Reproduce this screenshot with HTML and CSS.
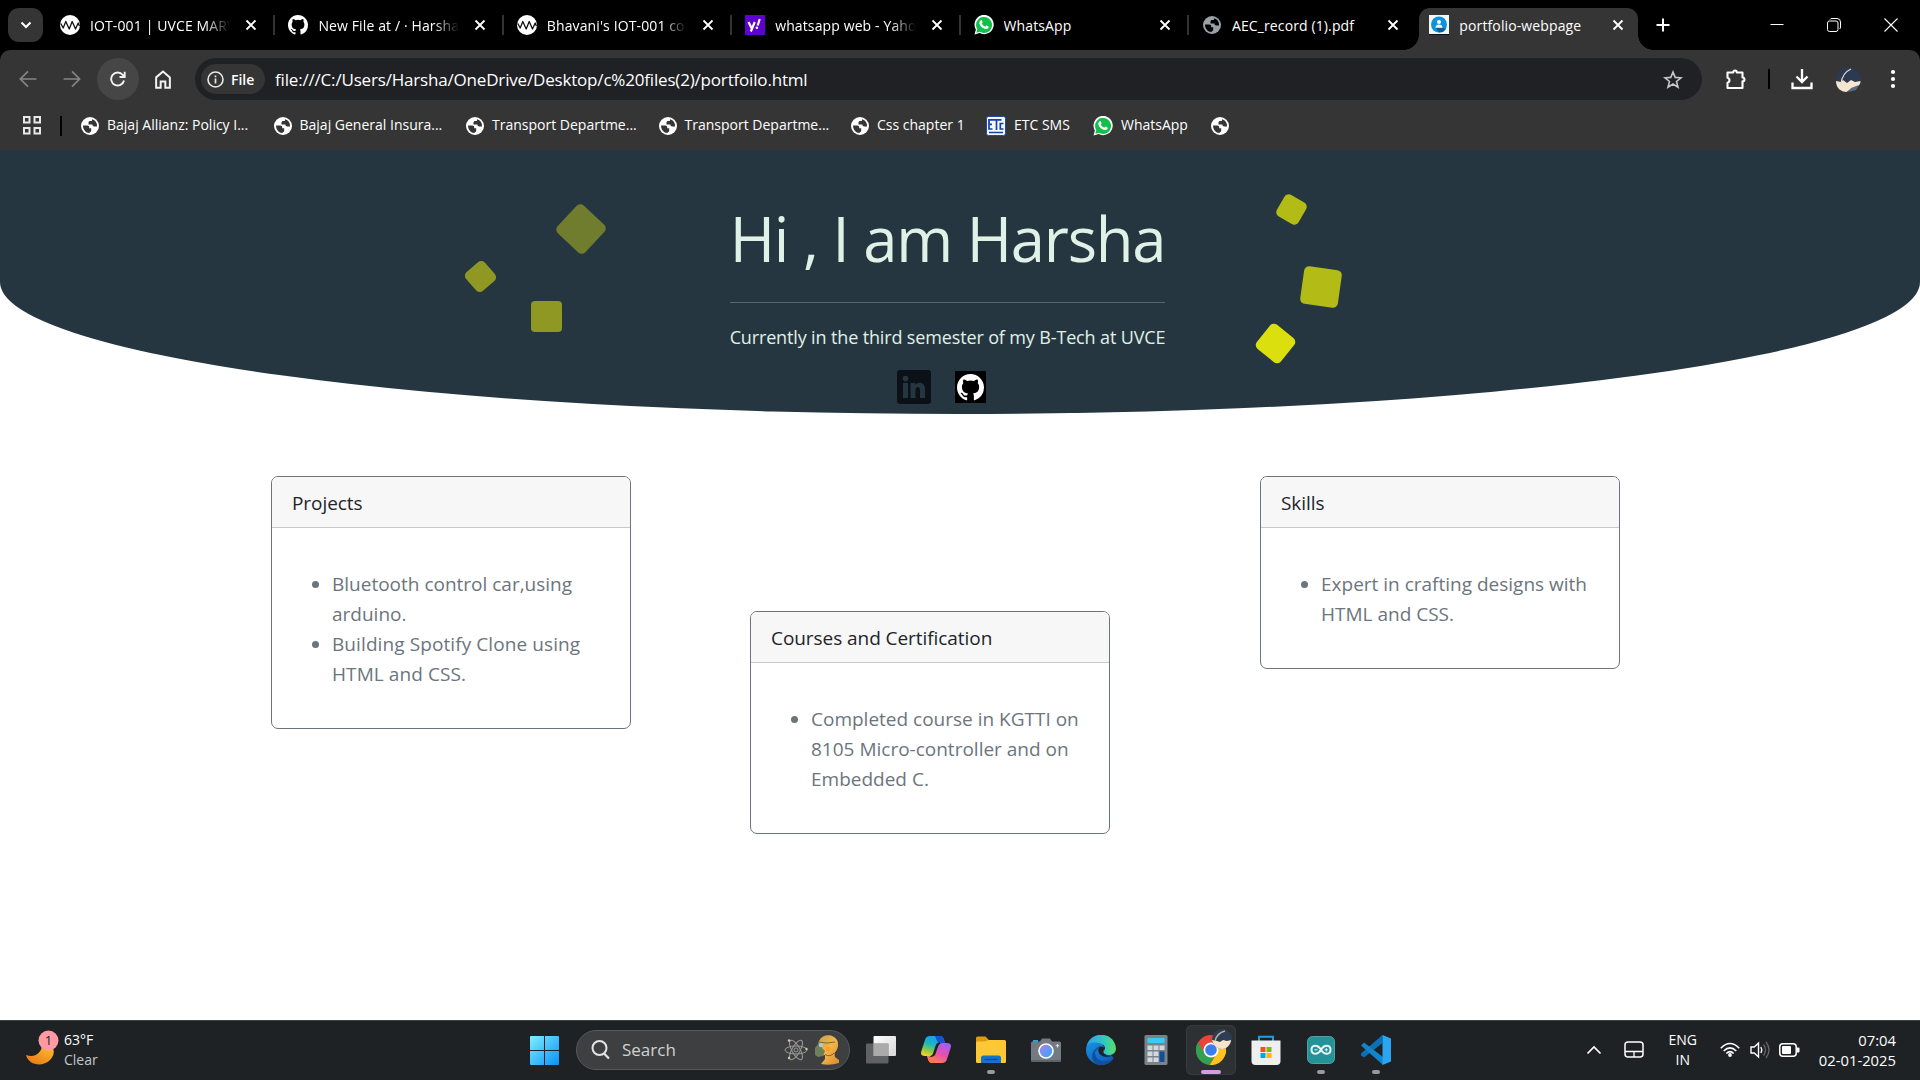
FILE: index.html
```html
<!DOCTYPE html>
<html lang="en">
<head>
<meta charset="utf-8">
<title>portfolio-webpage</title>
<link rel="stylesheet" href="styles.css">
</head>
<body>
<svg class="defs" aria-hidden="true">
  <symbol id="x" viewBox="0 0 12 12"><path d="M1.500 1.500l9 9M10.500 1.500l-9 9" stroke="currentColor" stroke-width="1.800" fill="none"/></symbol>
  <symbol id="wave" viewBox="0 0 20 20"><circle cx="10" cy="10" r="10" fill="#fff"/><path d="M.8 8.500l2.400 4.500 2.600-6.500 3.400 7.500 3-7.500 3.300 7.500 2.700-6 1.200 3" fill="none" stroke="#111" stroke-width="1.300" stroke-linejoin="round"/></symbol>
  <symbol id="github" viewBox="0 0 16 16"><path fill="currentColor" d="M8 0C3.580 0 0 3.580 0 8c0 3.540 2.290 6.530 5.470 7.590.4.070.55-.17.55-.38 0-.19-.01-.82-.01-1.490-2.010.37-2.530-.49-2.690-.94-.09-.23-.48-.94-.82-1.130-.28-.15-.68-.52-.01-.53.63-.01 1.080.58 1.230.82.72 1.210 1.870.87 2.330.66.07-.52.28-.87.51-1.070-1.780-.2-3.640-.89-3.640-3.950 0-.87.31-1.590.82-2.150-.08-.2-.36-1.020.08-2.120 0 0 .67-.21 2.200.82a7.600 7.600 0 0 1 4 0c1.530-1.040 2.200-.82 2.200-.82.44 1.100.16 1.920.08 2.120.51.56.82 1.270.82 2.150 0 3.070-1.870 3.750-3.650 3.950.29.25.54.73.54 1.480 0 1.070-.01 1.930-.01 2.200 0 .21.15.46.55.38A8 8 0 0 0 16 8c0-4.420-3.580-8-8-8z"/></symbol>
  <symbol id="globe" viewBox="0 0 18 18"><circle cx="9" cy="9" r="9" fill="currentColor"/><path d="M2 8.500h4.200c1.300 0 2 .7 2 1.800v.9h2v2.300c0 1-.8 1.600-1.900 2.500C5 15.800 2 13 2 8.500zM11 2.300C14.500 3.200 16.300 6 16 9.600h-2.700c-1.200 0-1.900-.8-1.900-2H7.500V5.800c0-1.200.7-1.800 1.900-1.800h1.100c.6 0 .6-.9.500-1.700z" fill="var(--hole)"/></symbol>
  <symbol id="whatsapp" viewBox="0 0 20 20"><path d="M.5 19.500l1.400-5A9.600 9.600 0 1 1 5.600 18z" fill="#fff"/><path d="M2.300 17.700l1-3.500a8 8 0 1 1 2.700 2.600z" fill="#10c04a"/><path d="M6.700 5.300c.5-.4 1-.3 1.200.2l.7 1.600c.1.400-.5 1-.8 1.400.8 1.500 1.900 2.500 3.500 3.200.5-.5.900-1.200 1.300-1.100l1.900.9c.4.3.1 1.300-.3 1.800-.7.800-1.900 1-3.200.6-2.700-.9-4.800-2.900-5.600-5.200-.4-1.400.3-2.700 1.300-3.400z" fill="#fff"/></symbol>
</svg>

<div class="tabstrip">
  <button class="tabsearch"><svg width="12" height="8" viewBox="0 0 12 8"><path d="M1.500 1.500L6 6l4.500-4.500" fill="none" stroke="#fff" stroke-width="2"/></svg></button>
  <div class="tab"><svg class="fav"><use href="#wave"/></svg><span class="name fade"><b class="t">IOT-001 | UVCE MARV</b></span><svg class="close"><use href="#x"/></svg></div>
  <div class="tab"><svg class="fav"><use href="#github"/></svg><span class="name fade"><b class="t">New File at / · Harsha</b></span><svg class="close"><use href="#x"/></svg></div>
  <div class="tab"><svg class="fav"><use href="#wave"/></svg><span class="name fade"><b class="t">Bhavani's IOT-001 cou</b></span><svg class="close"><use href="#x"/></svg></div>
  <div class="tab"><svg class="fav" viewBox="0 0 20 20"><rect width="20" height="20" fill="#5f01d1"/><path d="M3.500 7l3 6M9.800 7l-4 9.500M14.700 4l-2 6.500" stroke="#fff" stroke-width="2.200" fill="none"/><circle cx="11.900" cy="12.800" r="1.300" fill="#fff"/></svg><span class="name fade"><b class="t">whatsapp web - Yaho</b></span><svg class="close"><use href="#x"/></svg></div>
  <div class="tab"><svg class="fav"><use href="#whatsapp"/></svg><span class="name"><b class="t">WhatsApp</b></span><svg class="close"><use href="#x"/></svg></div>
  <div class="tab last"><svg class="fav dim"><use href="#globe" x="1" y="1" width="18" height="18"/></svg><span class="name"><b class="t">AEC_record (1).pdf</b></span><svg class="close"><use href="#x"/></svg></div>
  <div class="tab active"><svg class="fav" viewBox="0 0 20 20"><rect width="20" height="19" fill="#f4f6f8"/><rect y="19" width="20" height="1" fill="#111"/><circle cx="10" cy="9.500" r="8" fill="#0c93dc"/><path d="M6.500 12.500h7l3.500 1.500-3 3-4 .500z" fill="#0b5e96"/><circle cx="10" cy="7" r="2" fill="#fff"/><path d="M6.500 12.700c0-4.200 7-4.200 7 0z" fill="#fff"/></svg><span class="name"><b class="t">portfolio-webpage</b></span><svg class="close"><use href="#x"/></svg></div>
  <svg class="plus" width="14" height="14" viewBox="0 0 14 14"><path d="M7 .5v13M.5 7h13" stroke="#fff" stroke-width="2"/></svg>
  <div class="winctl">
    <svg width="14" height="14" viewBox="0 0 14 14"><path d="M.5 6.500h13" stroke="#fff"/></svg>
    <svg width="14" height="14" viewBox="0 0 14 14"><rect x=".5" y="3" width="10.500" height="10.500" rx="2" fill="none" stroke="#fff"/><path d="M3 1.500q.5-1 2-1h5q3.500 0 3.500 3.500v5q0 1.500-1 2" fill="none" stroke="#fff"/></svg>
    <svg width="14" height="14" viewBox="0 0 14 14"><path d="M.5.5l13 13M13.500.5l-13 13" stroke="#fff" stroke-width="1.100"/></svg>
  </div>
</div>

<div class="chrome">
  <div class="toolbar">
    <svg class="nav off" viewBox="0 0 16 16"><path d="M15.500 8H1.500M8 1.200L1.200 8 8 14.800" /></svg>
    <svg class="nav off" viewBox="0 0 16 16"><path d="M.5 8h14M8 1.200L14.800 8 8 14.800" /></svg>
    <span class="reload"><svg class="nav" viewBox="0 0 16 16"><path d="M14 9.500A6.500 6.500 0 1 1 12.800 4L14.500 5.800M14.700.8v5.200H9.500"/></svg></span>
    <svg class="nav home" viewBox="0 0 16 18"><path d="M1.500 7L8 1.500 14.500 7v9.800h-4.300V11H5.800v5.800H1.500z"/></svg>
    <div class="omnibox">
      <span class="chip"><svg width="17" height="17" viewBox="0 0 17 17"><circle cx="8.500" cy="8.500" r="7.500" fill="none" stroke="#e8e8e8" stroke-width="1.600"/><path d="M8.500 7.500v5M8.500 4.500v1.800" stroke="#e8e8e8" stroke-width="1.700"/></svg><b class="t">File</b></span>
      <span class="url"><b class="t">file:///C:/Users/Harsha/OneDrive/Desktop/c%20files(2)/portfoilo.html</b></span>
      <svg width="20" height="19" viewBox="0 0 20 19"><path d="M10 2l2.200 5.400 5.800.4-4.500 3.700 1.500 5.700-5-3.200-5 3.200 1.500-5.700L2 7.800l5.800-.4z" fill="none" stroke="#c7c7c7" stroke-width="1.600"/></svg>
    </div>
    <div class="tools">
      <svg width="22" height="22" viewBox="0 0 22 22"><path d="M2.500 4.500h5.700c0-2.600 3.600-2.600 3.600 0h5.700v5c2.600 0 2.600 3.800 0 3.800v6.700H2.500v-5.300c2.600-.6 2.600-4.400 0-5z" fill="none" stroke="#fff" stroke-width="2.100" stroke-linejoin="round"/></svg>
      <i class="bar"></i>
      <svg width="22" height="22" viewBox="0 0 22 22"><path d="M11 1v13M5.500 8.500L11 14l5.500-5.500M1.500 14.500v5.500h19v-5.500" fill="none" stroke="#fff" stroke-width="2.300"/></svg>
      <svg width="25" height="25" viewBox="0 0 25 25"><circle cx="12.500" cy="12.500" r="12.500" fill="#2b3a50"/><path d="M0 14l5 1 2-2 4 3 4-3 4 2 5.500-1c0 4-3 6-6 7l-4 1-4 3C5 25 0 21 0 14z" fill="#f6e6cf"/><path d="M5 17Q6 6 15 2" stroke="#e8dcc8" stroke-width="1.200" fill="none"/><path d="M15 21l8-3-3 5-8 2z" fill="#5b6b80"/></svg>
      <svg width="6" height="20" viewBox="0 0 6 20"><circle cx="3" cy="3" r="2.100" fill="#fff"/><circle cx="3" cy="10" r="2.100" fill="#fff"/><circle cx="3" cy="17" r="2.100" fill="#fff"/></svg>
    </div>
  </div>
  <div class="bookmarks">
    <svg class="apps" width="18" height="19" viewBox="0 0 18 19"><path d="M1 1h5.500v5.500H1zM11.500 1H17v5.500h-5.500zM1 12h5.500v5.500H1zM11.500 12H17v5.500h-5.500z" fill="none" stroke="#e8e8e8" stroke-width="2"/></svg>
    <i class="bar"></i>
    <span class="bm wide"><svg class="gl"><use href="#globe"/></svg><b class="t">Bajaj Allianz: Policy I...</b></span>
    <span class="bm wide"><svg class="gl"><use href="#globe"/></svg><b class="t">Bajaj General Insura...</b></span>
    <span class="bm wide"><svg class="gl"><use href="#globe"/></svg><b class="t">Transport Departme...</b></span>
    <span class="bm wide"><svg class="gl"><use href="#globe"/></svg><b class="t">Transport Departme...</b></span>
    <span class="bm w135"><svg class="gl"><use href="#globe"/></svg><b class="t">Css chapter 1</b></span>
    <span class="bm w107"><svg class="i20" viewBox="0 0 20 20"><rect x=".5" y=".5" width="19" height="19" rx="2" fill="#f5f8ff" stroke="#1c48b0"/><path d="M7 3.800H3V13h3.500M3 8.300h3M6.500 3.800h9M10.500 4v10M17.500 7.500h-3.200V13h3.200M3 16.500h14" fill="none" stroke="#1440a8" stroke-width="1.700"/></svg><b class="t">ETC SMS</b></span>
    <span class="bm w118"><svg class="i20"><use href="#whatsapp"/></svg><b class="t">WhatsApp</b></span>
    <span class="bm"><svg class="gl"><use href="#globe"/></svg></span>
  </div>
</div>

<main class="page">
  <header class="hero">
    <i class="sq s1"></i><i class="sq s2"></i><i class="sq s3"></i><i class="sq s4"></i><i class="sq s5"></i><i class="sq s6"></i>
    <h1>Hi , I am Harsha</h1>
    <hr>
    <p>Currently in the third semester of my B-Tech at UVCE</p>
    <div class="social">
      <svg width="34" height="34" viewBox="0 0 34 34"><path fill-rule="evenodd" d="M3 0h28a3 3 0 0 1 3 3v28a3 3 0 0 1-3 3H3a3 3 0 0 1-3-3V3a3 3 0 0 1 3-3zM6 13v15h5V13zM8.500 5.800a2.800 2.800 0 1 0 0 5.600 2.800 2.800 0 0 0 0-5.600zM13.500 13v15h5v-8c0-4 4.500-4 4.500 0v8h5v-9c0-7-7-8-9.700-4v-2z" fill="#0b1116"/></svg>
      <span class="gh"><svg width="27" height="27"><use href="#github"/></svg></span>
    </div>
  </header>
  <section class="cards">
    <article class="card c1"><h2>Projects</h2><ul><li>Bluetooth control car,using<br>arduino.</li><li class="loose">Building Spotify Clone using<br>HTML and CSS.</li></ul></article>
    <article class="card c2"><h2>Courses and Certification</h2><ul><li>Completed course in KGTTI on<br>8105 Micro-controller and on<br>Embedded C.</li></ul></article>
    <article class="card c3"><h2>Skills</h2><ul><li>Expert in crafting designs with<br>HTML and CSS.</li></ul></article>
  </section>
</main>

<footer class="taskbar">
  <div class="weather">
    <svg width="40" height="40" viewBox="0 0 40 40"><defs><linearGradient id="mo" x1="1" y1="0" x2=".3" y2="1"><stop offset="0" stop-color="#f9c22b"/><stop offset="1" stop-color="#ef7a1a"/></linearGradient></defs><path d="M6 25c9 3 15-2 16-9h10c3 5 2 10-2 14-7 7-21 6-24-5z" fill="url(#mo)"/><circle cx="28.500" cy="10.500" r="10" fill="#ff99a4"/><text x="28.500" y="15" text-anchor="middle" class="badge">1</text></svg>
    <div><b class="t">63°F</b><br><b class="t clear">Clear</b></div>
  </div>
  <svg class="start" width="29" height="29" viewBox="0 0 29 29"><defs><linearGradient id="wn" x2="1" y2="1"><stop offset="0" stop-color="#7df0ff"/><stop offset="1" stop-color="#0a90f8"/></linearGradient></defs><path d="M1 0h13v14H0V1a1 1 0 0 1 1-1zM15 0h13a1 1 0 0 1 1 1v13H15zM0 15h14v14H1a1 1 0 0 1-1-1zM15 15h14v13a1 1 0 0 1-1 1H15z" fill="url(#wn)"/></svg>
  <div class="search">
    <svg width="20" height="20" viewBox="0 0 20 20"><circle cx="8.500" cy="8" r="7" fill="none" stroke="#e4e4e4" stroke-width="2"/><path d="M13 13.500l5 5" stroke="#e4e4e4" stroke-width="2.200"/></svg>
    <b class="t">Search</b>
    <svg class="atom" width="24" height="24" viewBox="0 0 24 24"><g fill="none" stroke="#9b9b98" stroke-width="1"><ellipse cx="12" cy="12" rx="11" ry="4"/><ellipse cx="12" cy="12" rx="11" ry="4" transform="rotate(60 12 12)"/><ellipse cx="12" cy="12" rx="11" ry="4" transform="rotate(120 12 12)"/><circle cx="12" cy="12" r="2"/></g><circle cx="5" cy="2.500" r="1.200" fill="#d8c8a0"/><circle cx="22.500" cy="11" r="1.200" fill="#d8c8a0"/><circle cx="5" cy="20" r="1.200" fill="#b8d8a0"/></svg>
    <svg width="26" height="30" viewBox="0 0 26 30"><defs><linearGradient id="hd" x2="1" y2="1"><stop offset="0" stop-color="#b89a50"/><stop offset=".5" stop-color="#f2b84b"/><stop offset="1" stop-color="#d98a2c"/></linearGradient></defs><path d="M5 6C9-2 20-1 23.500 6c1.500 5 0 9-3 12l.5 4 4 3v3q-9 3-18 1l4-5v-4l-6 1-3-3-1-4 3-4z" fill="url(#hd)"/><path d="M1 13l4-5 4 1-1 4 3 3-2 5-5 1-3-2z" fill="#6e7f5a"/><circle cx="7" cy="10" r="2.200" fill="#a8cbd6"/><path d="M4 7l9 1 8-1" stroke="#7c6a3c" stroke-width="1.200" fill="none"/><circle cx="14" cy="14" r="2.600" fill="#ff9c2b"/><path d="M11 19.500q5 3 9-1.500" stroke="#8a5a20" fill="none"/></svg>
  </div>
  <div class="apps-row">
    <span class="app"><svg viewBox="0 0 30 30"><defs><linearGradient id="tv" x2="1" y2="1"><stop offset="0" stop-color="#fff"/><stop offset="1" stop-color="#d6d6d6"/></linearGradient></defs><rect x="7.500" y="1" width="22.500" height="20" rx="1" fill="url(#tv)"/><rect y="8.500" width="22.500" height="20" rx="1" fill="#777" fill-opacity=".75"/><rect x="7.500" y="8.500" width="15" height="12.500" fill="#aaa"/></svg></span>
    <span class="app"><svg viewBox="0 0 30 30"><defs><linearGradient id="ca" x1=".6" x2=".2" y2="1"><stop offset="0" stop-color="#1aa0f0"/><stop offset=".4" stop-color="#18b5c4"/><stop offset=".7" stop-color="#7cc850"/><stop offset="1" stop-color="#ffd21c"/></linearGradient><linearGradient id="cb" x1=".7" x2=".2" y2="1"><stop offset="0" stop-color="#a060f0"/><stop offset=".5" stop-color="#ea4fae"/><stop offset="1" stop-color="#ff8a40"/></linearGradient></defs><path d="M9 1h10q3 0 4 4l1 3h-5q-3 0-4 3l-2 7q-1 3-4 3H4q-4 0-4-3 0-1 1-4L4 5q1-4 5-4z" fill="url(#ca)"/><path d="M14 1h5q3 0 4 4l1 3h-5q-2 0-3-2z" fill="#1b50d4"/><path d="M21 28H11q-3 0-4-4l-1-3h4q3 0 4-3l3-7q1-3 4-3h5q4 0 4 3 0 1-1 4l-3 9q-1 4-5 4z" fill="url(#cb)"/><path d="M6 21h4q2 0 3-2l2 9h-4q-3 0-4-4z" fill="#ff7654"/><path d="M15.500 10.500q1-2.500 3.500-2.500-2 1-2.700 3.200l-2.500 7.500q-.8 2-2.800 2.300 1.300-1 1.800-2.500z" fill="#1e2225" stroke="#1e2225" stroke-width="1.500"/></svg></span>
    <span class="app run"><svg viewBox="0 0 30 30"><path d="M0 3q0-1.500 1.500-1.500h8L13 5h12v6H0z" fill="#e09a10"/><path d="M1.500 6.500H9L13 5h15.500Q30 5 30 6.500V27q0 1-1.500 1h-27Q0 28 0 27V8q0-1.500 1.500-1.500z" fill="#fcc934"/><path d="M5 28v-5q0-2.500 2.500-2.500h15Q25 20.500 25 23v5z" fill="#1173cc"/><path d="M8.500 24.500h13" stroke="#0a4f96" stroke-width="1.300"/></svg></span>
    <span class="app"><svg viewBox="0 0 30 30"><path d="M2 5h5v3H2z" fill="#20a8e8"/><path d="M0 8q0-1.500 1.500-1.500H9l2-3h8l2 3h7.500Q30 6.500 30 8v18H0z" fill="#747a82"/><path d="M0 25h30v2H1q-1 0-1-1z" fill="#5d636b"/><defs><linearGradient id="cm" x2="1" y2="1"><stop offset="0" stop-color="#b87af0"/><stop offset="1" stop-color="#20b0f0"/></linearGradient></defs><circle cx="15" cy="16" r="7" fill="url(#cm)" stroke="#fff" stroke-width="1.600"/><path d="M26.500 9v3.500M24.700 10.700h3.600" stroke="#dde" stroke-width="1"/></svg></span>
    <span class="app"><svg viewBox="0 0 30 30"><defs><linearGradient id="ea" x2="1"><stop offset="0" stop-color="#2aa4ea"/><stop offset=".6" stop-color="#30c8c0"/><stop offset="1" stop-color="#5be064"/></linearGradient><linearGradient id="eb" x2=".6" y2="1"><stop offset="0" stop-color="#1a9de8"/><stop offset="1" stop-color="#0d60c0"/></linearGradient></defs><path d="M15 0C7 0 0 7 0 15s7 15 15 15c5 0 10-3 12.500-7.500L18 14z" fill="url(#eb)"/><path d="M9 17c0 8 8 13 19 6-4 7-13 9-19 5-4-4-5-12 5-17-3 4-4 5-5 6z" fill="#124f9c"/><path d="M1 10C5-3 24-4 29 9c3 8-2 11-6 11-4 0-6-2-5-4 3-4-1-8-6-8-5-1-9 0-11 2z" fill="url(#ea)"/><path d="M17.500 12.500c-3-2.500-6 .5-5 4 1 4.500 7 7 15 4-3 .5-6 .5-9-1.500-1.800-1.500-1.600-2.700-.7-4 .4-1 .3-1.700-.3-2.500z" fill="#1f2326"/></svg></span>
    <span class="app"><svg viewBox="0 0 30 30"><rect x="3.500" width="23" height="30" rx="1.500" fill="#7c8388"/><rect x="6.500" y="3" width="17" height="5" fill="#35cdf2"/><path d="M6.500 10.500h5v4.500h-5zM12.500 10.500h5v4.500h-5zM18.500 10.500h5v4.500h-5zM6.500 16.500h5v4.500h-5zM12.500 16.500h5v4.500h-5zM6.500 22.500h5V27h-5zM12.500 22.500h5V27h-5z" fill="#d2d8dc"/><path d="M18.500 16.500h5V27h-5z" fill="#124f96"/></svg></span>
    <span class="app on"><svg viewBox="0 0 30 30"><circle cx="15" cy="15" r="15" fill="#e8453a"/><path d="M2 7.500A15 15 0 0 0 13.500 30l7-12L8.500 18z" fill="#30a14e"/><path d="M15 8h13.300A15 15 0 0 1 13.800 30L21 18z" fill="#fdc420"/><circle cx="15" cy="15" r="7.500" fill="#fff"/><circle cx="15" cy="15" r="5.800" fill="#3b7df0"/></svg><svg class="face" viewBox="0 0 20 20"><circle cx="10" cy="10" r="10" fill="#2f3d54"/><path d="M0 11l5 1 3 1 3-2 4 1 4-1c0 4-4 9-9 9S1 16 0 11z" fill="#f4e4cc"/><path d="M3 12Q5 4 13 2" stroke="#b9b4aa" stroke-width="1.500" fill="none"/></svg></span>
    <span class="app"><svg viewBox="0 0 30 30"><path d="M8 6V1.800h14V6" fill="none" stroke="#1f9fe0" stroke-width="2"/><path d="M.5 5.500h29V26q0 4-4 4h-21q-4 0-4-4z" fill="#efefef"/><path d="M9.500 12h5v5h-5z" fill="#f25022"/><path d="M15.500 12h5v5h-5z" fill="#7fba00"/><path d="M9.500 18h5v5h-5z" fill="#00a4ef"/><path d="M15.500 18h5v5h-5z" fill="#ffb900"/></svg></span>
    <span class="app run"><svg viewBox="0 0 30 30"><rect x="1.500" y="1.500" width="27" height="27" rx="5" fill="#229399" stroke="#5fb3b2" stroke-width=".8"/><path d="M15 14.800C11.500 9 5.500 10 5.500 14.800s6 5.800 9.500 0c3.500-5.800 9.500-4.800 9.500 0s-6 5.800-9.500 0z" fill="none" stroke="#eaf6f6" stroke-width="2"/><path d="M8.500 14.800h3M18.700 14.800h3.200M20.300 13.200v3.200" stroke="#eaf6f6" stroke-width="1"/></svg></span>
    <span class="app run"><svg viewBox="0 0 30 30"><path d="M21.500 0v8L3 22.500 0 20.500v-2z" fill="#0a70b8"/><path d="M0 10.500l3-3L22 22v8z" fill="#1284cc"/><path d="M21.500 0L30 3.500v23L21.500 30z" fill="#2ba4f2"/></svg></span>
  </div>
  <div class="tray">
    <svg width="16" height="10" viewBox="0 0 16 10"><path d="M1.500 8.500L8 2l6.500 6.500" fill="none" stroke="#fff" stroke-width="1.700"/></svg>
    <svg class="pad" width="20" height="17" viewBox="0 0 20 17"><rect x="1" y="1" width="18" height="15" rx="3" fill="none" stroke="#fff" stroke-width="1.500"/><path d="M1 10.500h18M10 10.500V16" stroke="#fff" stroke-width="1.300"/></svg>
    <div class="lang"><b class="t">ENG</b><br><b class="t">IN</b></div>
    <svg class="wifi" width="20" height="15" viewBox="0 0 20 15"><path d="M.8 6.200q9.200-9.400 18.400 0M3.700 9q6.300-6.300 12.600 0M6.300 11.500q3.700-3.700 7.400 0" fill="none" stroke="#fff" stroke-width="1.500"/><circle cx="10" cy="13" r="1.900" fill="#fff"/></svg>
    <svg width="20" height="18" viewBox="0 0 20 18"><path d="M1 6h3.200L8.500 2v14L4.200 12H1z" fill="none" stroke="#fff" stroke-width="1.400"/><path d="M10.800 6q2 3 0 6" fill="none" stroke="#fff" stroke-width="1.300"/><path d="M13.500 3.500q4 5.500 0 11M16 1q6 8 0 16" fill="none" stroke="#666" stroke-width="1.300"/></svg>
    <svg class="bat" width="21" height="14" viewBox="0 0 21 14"><rect x=".8" y=".8" width="16.400" height="12.400" rx="3" fill="none" stroke="#fff" stroke-width="1.500"/><rect x="3" y="3" width="9" height="8" rx="1" fill="#fff"/><path d="M18 4.500h1.500q1 0 1 1v3q0 1-1 1H18z" fill="#fff"/></svg>
    <div class="clock"><b class="t">07:04</b><br><b class="t">02-01-2025</b></div>
  </div>
</footer>
</body>
</html>
```
FILE: styles.css
```css
* { box-sizing: border-box; }
body { margin: 0; width: 1920px; height: 1080px; overflow: hidden; background: #000; font-family: "Open Sans", "Noto Sans", sans-serif; display: flex; flex-direction: column; }
b.t { font-weight: inherit; white-space: pre; }
svg { display: block; flex: none; }
.defs { position: absolute; width: 0; height: 0; }

.tabstrip { height: 50px; background: #000; display: flex; align-items: center; padding-left: 8px; color: #fff; font-size: 14px; letter-spacing: .12px; flex: none; }
.tabsearch { width: 35px; height: 34px; border: 0; padding: 0; border-radius: 11px; background: #353535; display: grid; place-items: center; margin-right: 4px; }
.tab { width: 228.4px; height: 50px; padding: 0 18px 0 13px; display: flex; align-items: center; position: relative; flex: none; }
.tab::after { content: ""; position: absolute; right: 0; top: 15px; width: 2px; height: 20px; background: #333; }
.tab.last::after, .tab.active::after { display: none; }
.fav { width: 20px; height: 20px; color: #fff; margin-right: 10px; }
.fav.dim { color: #9aa0a6; --hole: #000; }
.name { flex: 1; overflow: hidden; margin-right: 15px; line-height: 24px; padding-top: 1px; }
.fade { -webkit-mask: linear-gradient(90deg, #000 82%, transparent); mask: linear-gradient(90deg, #000 82%, transparent); }
.close { width: 12px; height: 12px; color: #fff; }
.tab.active { width: 219px; align-self: flex-end; margin: 0 0 0 2px; height: 42px; padding: 0 14px 8px 10px; background: #353535; border-radius: 11px 11px 0 0; }
.tab.active::before { content: ""; position: absolute; left: -15px; right: -15px; bottom: 0; height: 15px; background: radial-gradient(circle at 0 0, transparent 14.5px, #353535 15px) left / 15px 15px no-repeat, radial-gradient(circle at 100% 0, transparent 14.5px, #353535 15px) right / 15px 15px no-repeat; }
.plus { margin-left: 17.5px; }
.winctl { margin-left: auto; margin-right: 22px; display: flex; gap: 43px; }

.chrome { height: 100px; flex: none; background: #353535; border-radius: 10px 10px 0 0; color: #fff; --hole: #353535; }
.toolbar { height: 58px; display: flex; align-items: center; padding-left: 18.5px; }
.nav { width: 18px; height: 18px; fill: none; stroke: #f2f2f2; stroke-width: 1.9; }
.nav.off { stroke: #858585; stroke-width: 1.5; margin-right: 26px; }
.reload { width: 42px; height: 42px; border-radius: 50%; background: #464646; display: grid; place-items: center; margin: 0 15px 0 -9.5px; }
.reload .nav { width: 16px; height: 16px; }
.nav.home { height: 19px; margin-right: 23px; }
.omnibox { width: 1507px; height: 42px; background: #202124; border-radius: 21px; display: flex; align-items: center; padding: 0 19px 0 6px; }
.chip { width: 64px; height: 30px; border-radius: 15px; background: #353535; display: flex; align-items: center; gap: 7px; padding-left: 6px; font-size: 14px; font-weight: 600; }
.url { flex: 1; margin-left: 10px; font-size: 17px; letter-spacing: -.18px; }
.tools { display: flex; align-items: center; margin-left: 23px; }
.tools .bar { margin: 0 21px; }
.tools svg:nth-of-type(2) { margin-right: 22.5px; }
.tools svg:nth-of-type(3) { margin-right: 29px; }
.bar { width: 2px; height: 20px; background: #000; }
.bookmarks { height: 35px; display: flex; align-items: center; font-size: 14px; padding-left: 23px; }
.bookmarks .bar { margin: 0 19px; }
.bm { display: flex; align-items: center; gap: 8px; line-height: 18px; }
.bm .t { margin-top: -2px; }
.gl { width: 18px; height: 18px; }
.i20 { width: 20px; height: 20px; }
.wide { width: 192.5px; } .w135 { width: 135px; } .w107 { width: 107px; } .w118 { width: 118px; }

.page { height: 870px; flex: none; background: #fff; }
.hero { position: relative; height: 264px; background: #253641; border-radius: 0 0 50% 50%; color: #e0f1e6; display: flex; flex-direction: column; align-items: center; padding: 51px 25px 0 0; }
.hero h1 { margin: 0; font-size: 61.5px; line-height: 75px; font-weight: 400; letter-spacing: -1.2px; white-space: nowrap; }
.hero hr { width: 435px; height: 1px; border: 0; background: #566770; margin: 26px 0 19px; }
.hero p { margin: 0; font-size: 18px; line-height: 30px; letter-spacing: -.14px; white-space: nowrap; }
.social { display: flex; align-items: center; gap: 24px; margin: 18px 0 0 -13px; }
.gh { width: 31px; height: 32px; background: #000; color: #fff; display: grid; place-items: center; }
.sq { position: absolute; border-radius: 5px; }
.s1 { left: 561.5px; top: 60px; width: 38px; height: 38px; transform: rotate(43deg); background: #717d2e; }
.s2 { left: 468px; top: 114px; width: 25px; height: 25px; transform: rotate(49deg); background: #8f9822; }
.s3 { left: 531px; top: 151px; width: 31px; height: 31px; border-radius: 4px; background: #8f9822; }
.s4 { left: 1279px; top: 47px; width: 25px; height: 25px; transform: rotate(30deg); background: #b3bb17; }
.s5 { left: 1302px; top: 118px; width: 38px; height: 38px; transform: rotate(8deg); background: #b3bb17; }
.s6 { left: 1260px; top: 178px; width: 31px; height: 31px; transform: rotate(39deg); background: #dadf0d; }

.cards { display: flex; align-items: flex-start; padding: 62px 0 0 271px; font-size: 19px; line-height: 30px; }
.card { width: 360px; border: 1px solid #6c757d; border-radius: 7px; overflow: hidden; }
.card h2 { margin: 0; height: 51px; padding: 11px 20px 9px; font-size: inherit; line-height: 30px; font-weight: 400; letter-spacing: -.06px; color: #212529; background: #f7f7f7; border-bottom: 1px solid #c7c9cb; }
.card ul { margin: 0; padding: 41px 0 39px 60px; color: #6c757d; white-space: nowrap; }
.loose { letter-spacing: .09px; }
.c2 { margin: 135px 150px 0 119px; }

.taskbar { height: 60px; flex: none; background: #1e2225; border-top: 1px solid #3c4143; display: flex; align-items: center; color: #fff; font-size: 14px; line-height: 20px; padding-bottom: 1px; }
.weather { width: 530px; display: flex; align-items: center; gap: 4px; padding: 0 0 1px 20px; }
.clear { color: #c4c6c8; }
.badge { font-size: 13px; fill: #222; }
.search { width: 274px; height: 40px; margin: 0 3px 0 17px; border: 1px solid #56595b; border-radius: 20px; background: #3d3f41; display: flex; align-items: center; padding-left: 14px; font-size: 17px; color: #d2d2d2; }
.search > b { width: 151px; margin-left: 11px; }
.search .atom { margin: 0 6px 0 11px; }
.apps-row { display: flex; }
.app { width: 50px; height: 50px; margin: 0 2.5px; border-radius: 6px; display: grid; place-items: center; position: relative; }
.app svg { width: 30px; height: 30px; }
.run::after, .on::after { content: ""; position: absolute; bottom: 1px; left: 21px; width: 8px; height: 4px; border-radius: 2px; background: #999; }
.on { background: #2d3133; box-shadow: inset 0 0 0 1px #383c3e; }
.on::after { left: 15px; width: 20px; background: #d99be0; }
.app .face { position: absolute; left: 26px; top: 4px; width: 20px; height: 20px; }
.tray { margin-left: auto; margin-right: 24px; display: flex; align-items: center; padding-bottom: 1px; }
.pad { margin: 0 23px 0 22px; }
.lang { width: 32px; text-align: center; }
.wifi { margin: 0 10px 0 21px; }
.bat { margin: 0 19px 0 9px; }
.clock { text-align: right; font-size: 14.8px; }
```
